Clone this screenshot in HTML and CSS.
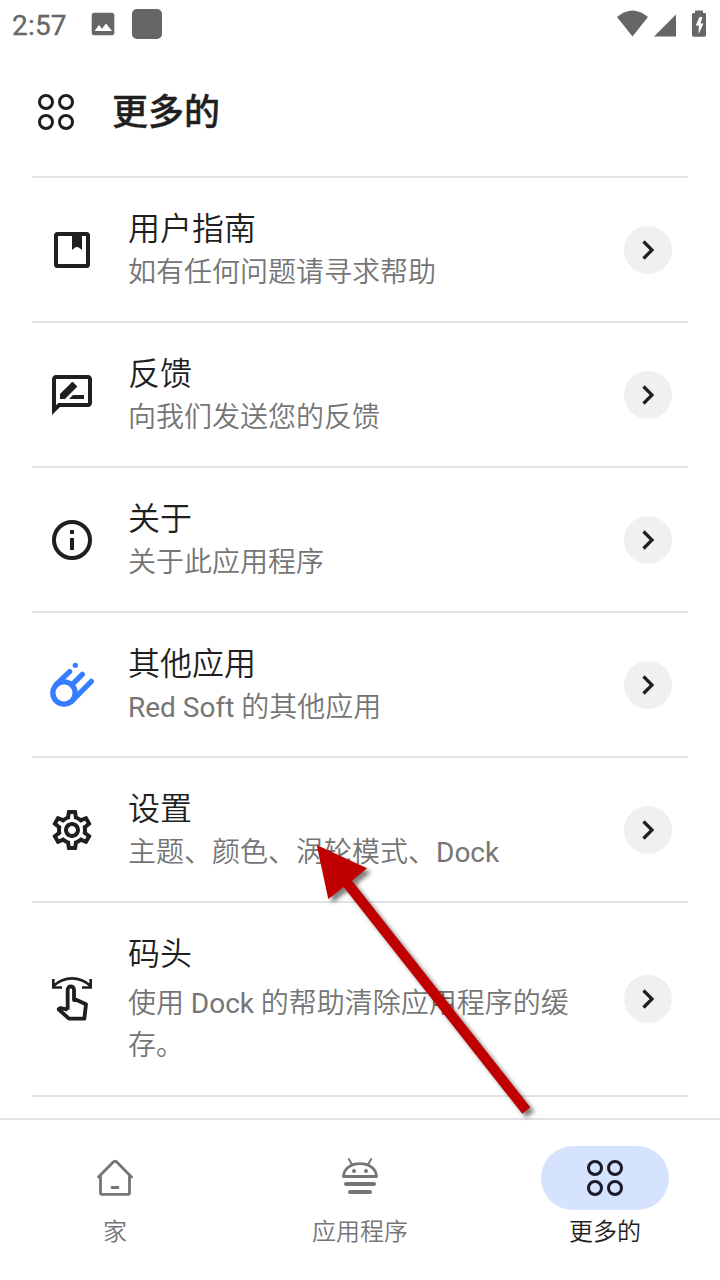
FILE: index.html
```html
<!DOCTYPE html>
<html lang="zh-CN">
<head>
<meta charset="utf-8">
<title>更多的</title>
<link rel="stylesheet" href="styles.css">
</head>
<body>
<svg class="defs" width="0" height="0">
  <symbol id="grid" viewBox="0 0 36 36"><g fill="none" stroke="currentColor" stroke-width="3"><circle cx="8" cy="8" r="6.5"/><circle cx="28" cy="8" r="6.5"/><circle cx="8" cy="28" r="6.5"/><circle cx="28" cy="28" r="6.5"/></g></symbol>
  <symbol id="chevron" viewBox="0 0 48 48"><path d="M19.500 15.500 28 24l-8.500 8.500" fill="none" stroke="currentColor" stroke-width="3.200"/></symbol>
</svg>
<div class="screen">
  <div class="status">
    <span class="time">2:57</span>
    <svg class="photo" width="24" height="24" viewBox="0 0 24 24"><rect x=".7" y=".7" width="22.600" height="22.600" rx="2.500" fill="currentColor"/><path d="M3.500 19 8 13l3 3.800L15 11.500 21 19z" fill="#fff"/></svg>
    <span class="block"></span>
    <svg class="signals" width="92" height="30" viewBox="0 0 92 30" fill="currentColor"><path d="M1 10Q16.500-3 32 10L16.500 29.500z"/><path d="M38 29.500h22V7.500z"/><path fill-rule="evenodd" d="M79 6V3.500h8V6h1.500Q90 6 90 7v21q0 1.700-1.500 1.700h-11Q76 29.700 76 28V7.500Q76 6 77.500 6zm4.500 4-3.800 8.500h3v8.500l4.800-10.500h-3l2-6.500z"/></svg>
  </div>
  <header class="header"><svg width="36" height="36"><use href="#grid"/></svg><h1>更多的</h1></header>
  <main class="list">
    <div class="row">
      <svg class="icon" viewBox="0 0 48 48"><rect x="8" y="8" width="32" height="32" rx="1.500" fill="none" stroke="currentColor" stroke-width="4"/><path fill="currentColor" d="M24 8h10v16l-2.800-2.300q-2.200-1.200-4.400 0L24 24z"/></svg>
      <div class="text"><h2>用户指南</h2><p>如有任何问题请寻求帮助</p></div>
      <svg class="go"><use href="#chevron"/></svg>
    </div>
    <div class="row">
      <svg class="icon" viewBox="0 0 24 24"><path fill="currentColor" d="M20 2H4c-1.100 0-1.990.9-1.990 2L2 22l4-4h14c1.100 0 2-.9 2-2V4c0-1.100-.9-2-2-2zm0 14H5.170l-.59.59-.58.58V4h16v12zm-9.500-2H18v-2h-5.500zm3.860-5.870c.2-.2.2-.51 0-.71l-1.770-1.770c-.2-.2-.51-.2-.71 0L6 11.530V14h2.470l5.890-5.870z"/></svg>
      <div class="text"><h2>反馈</h2><p>向我们发送您的反馈</p></div>
      <svg class="go"><use href="#chevron"/></svg>
    </div>
    <div class="row">
      <svg class="icon" viewBox="0 0 24 24"><circle cx="12" cy="12" r="9" fill="none" stroke="currentColor" stroke-width="2"/><path fill="currentColor" d="M11 7h2v2h-2zm0 4h2v6h-2z"/></svg>
      <div class="text"><h2>关于</h2><p>关于此应用程序</p></div>
      <svg class="go"><use href="#chevron"/></svg>
    </div>
    <div class="row">
      <svg class="icon comet" viewBox="24 24 144 144" fill="none" stroke="currentColor" stroke-width="16" stroke-linecap="round"><circle cx="72" cy="120" r="33.500"/><path d="M48 95 89 56M97 94l30-30M96 144l58-59"/><circle cx="106" cy="37" r="8" fill="currentColor" stroke="none"/></svg>
      <div class="text"><h2>其他应用</h2><p><span class="latin">Red Soft</span> 的其他应用</p></div>
      <svg class="go"><use href="#chevron"/></svg>
    </div>
    <div class="row">
      <svg class="icon" viewBox="0 0 24 24"><path fill="currentColor" d="M19.430 12.980c.04-.32.07-.64.07-.98 0-.34-.03-.66-.07-.98l2.110-1.650c.19-.15.24-.42.12-.64l-2-3.460a.5.5 0 0 0-.61-.22l-2.490 1c-.52-.4-1.080-.73-1.690-.98l-.38-2.650A.488.488 0 0 0 14 2h-4c-.25 0-.46.18-.49.42l-.38 2.650c-.61.25-1.170.59-1.690.98l-2.490-1a.566.566 0 0 0-.18-.03c-.17 0-.34.09-.43.25l-2 3.460c-.13.22-.07.49.12.64l2.110 1.650c-.04.32-.07.65-.07.98 0 .33.03.66.07.98l-2.110 1.650c-.19.15-.24.42-.12.64l2 3.460a.5.5 0 0 0 .61.22l2.490-1c.52.4 1.080.73 1.690.98l.38 2.650c.03.24.24.42.49.42h4c.25 0 .46-.18.49-.42l.38-2.650c.61-.25 1.170-.59 1.690-.98l2.490 1c.06.02.12.03.18.03.17 0 .34-.09.43-.25l2-3.460c.12-.22.07-.49-.12-.64l-2.110-1.650zm-1.980-1.710c.04.31.05.52.05.73 0 .21-.02.43-.05.73l-.14 1.130.89.7 1.080.84-.7 1.210-1.270-.51-1.040-.42-.9.68c-.43.32-.84.56-1.250.73l-1.060.43-.16 1.130-.2 1.350h-1.400l-.19-1.350-.16-1.130-1.060-.43c-.43-.18-.83-.41-1.230-.71l-.91-.7-1.060.43-1.270.51-.7-1.210 1.080-.84.89-.7-.14-1.130c-.03-.31-.05-.54-.05-.74s.02-.43.05-.73l.14-1.130-.89-.7-1.080-.84.7-1.210 1.270.51 1.040.42.9-.68c.43-.32.84-.56 1.250-.73l1.060-.43.16-1.130.2-1.350h1.390l.19 1.350.16 1.130 1.060.43c.43.18.83.41 1.230.71l.91.7 1.060-.43 1.270-.51.7 1.210-1.070.85-.89.7.14 1.130zM12 8c-2.210 0-4 1.790-4 4s1.790 4 4 4 4-1.790 4-4-1.790-4-4-4zm0 6c-1.100 0-2-.9-2-2s.9-2 2-2 2 .9 2 2-.9 2-2 2z"/></svg>
      <div class="text"><h2>设置</h2><p>主题、颜色、涡轮模式、<span class="latin">Dock</span></p></div>
      <svg class="go"><use href="#chevron"/></svg>
    </div>
    <div class="row row-tall">
      <svg class="icon" viewBox="24 24 144 144" fill="none" stroke="currentColor"><path stroke-width="8" d="M40 36v25.500H66M152 36v25.500H126M41 56Q66 34 96 34T151 56"/><path stroke-width="11.500" stroke-linejoin="round" d="M83 128V68a9.500 9.500 0 0 1 19 0v31h8l28 13-5 43H87L56 127l5-4 22 5"/></svg>
      <div class="text"><h2>码头</h2><p>使用 <span class="latin">Dock</span> 的帮助清除应用程序的缓存。</p></div>
      <svg class="go"><use href="#chevron"/></svg>
    </div>
  </main>
  <nav class="nav">
    <div class="tab"><span class="pill"><svg width="40" height="40" viewBox="0 0 40 40" fill="none" stroke="currentColor" stroke-width="2.800" stroke-linecap="round" stroke-linejoin="round"><path d="M3.500 19 18 4.300q2-2 4 0L36.500 19M5.500 18V35q0 1.400 1.400 1.400h26.200q1.400 0 1.400-1.400V18M17 29.500h6"/></svg></span><span class="label">家</span></div>
    <div class="tab"><span class="pill"><svg width="40" height="40" viewBox="0 0 40 40" fill="none" stroke="currentColor" stroke-width="2.800" stroke-linejoin="round"><path d="M3.500 18.500C4 1.300 36 1.300 36.500 18.500z"/><path d="m8.500.5 3.500 6M31.500.5l-3.500 6" stroke-width="2"/><g fill="currentColor" stroke="none"><circle cx="14" cy="13" r="2"/><circle cx="26" cy="13" r="2"/></g><path stroke-width="4" stroke-linecap="round" d="M6 26h28M10 34h20"/></svg></span><span class="label">应用程序</span></div>
    <div class="tab active"><span class="pill"><svg width="36" height="36"><use href="#grid"/></svg></span><span class="label">更多的</span></div>
  </nav>
  <svg class="arrow" width="240" height="300" viewBox="310 835 240 300"><path fill="#c00000" d="M316.700 845 367 868.300l-15 12.400 178.300 226.600-8 6.400L343.700 887l-15.400 12z"/></svg>
</div>
</body>
</html>
```
FILE: styles.css
```css
* { box-sizing: border-box; }
body { margin: 0; background: #fff; color: #1f1f1f; font-family: Roboto, "Noto Sans CJK SC", sans-serif; }
h1, h2, p { margin: 0; }
svg { display: block; flex: none; }
.defs { position: absolute; }
.screen { position: relative; width: 720px; height: 1280px; overflow: hidden; display: flex; flex-direction: column; }
.status { height: 48px; flex: none; display: flex; align-items: center; padding: 0 12px; color: #666; }
.time { width: 79px; font-size: 28px; line-height: 48px; font-weight: 400; padding-top: 4px; letter-spacing: .2px; -webkit-text-stroke: .3px; }
.block { width: 30px; height: 30px; margin-left: 17px; border-radius: 5px; background: #666; }
.signals { margin-left: auto; margin-top: -4px; }
.header { height: 128px; flex: none; display: flex; align-items: center; gap: 38px; padding-left: 38px; }
.header h1 { padding-top: 2px; font-size: 36px; line-height: 48px; font-weight: 500; -webkit-text-stroke: .4px; }
.list { flex: 1; margin: 0 32px; border-top: 2px solid #e1e1e6; }
.row { height: 145px; display: flex; align-items: center; padding: 0 16px; border-bottom: 2px solid #e1e1e6; }
.row-tall { height: 194px; }
.icon { width: 48px; height: 48px; margin-right: 32px; }
.comet { color: #377dff; }
.text { flex: 1; align-self: flex-start; padding-top: 32px; font-weight: 350; }
.text h2 { font-size: 32px; line-height: 38px; font-weight: 350; }
.text p { width: 460px; margin-top: 4px; font-size: 28px; line-height: 42px; color: #757575; }
.text .latin { font-weight: 400; }
.row-tall p { margin-top: 10px; }
.go { width: 48px; height: 48px; border-radius: 50%; background: #f0f0f0; }
.nav { height: 162px; flex: none; display: flex; gap: 15px; border-top: 2px solid #e1e1e6; padding-top: 26px; color: #757575; background: #fff; }
.tab { width: 230px; display: flex; flex-direction: column; align-items: center; }
.pill { width: 128px; height: 64px; border-radius: 32px; display: flex; align-items: center; justify-content: center; }
.label { margin-top: 5px; font-size: 24px; line-height: 34px; font-weight: 350; }
.active { color: #1f1f1f; }
.active .pill { background: #d6e3ff; color: #1b1b2b; }
.arrow { position: absolute; left: 310px; top: 835px; filter: drop-shadow(4px 4px 2px rgba(0,0,0,.5)); }
```
